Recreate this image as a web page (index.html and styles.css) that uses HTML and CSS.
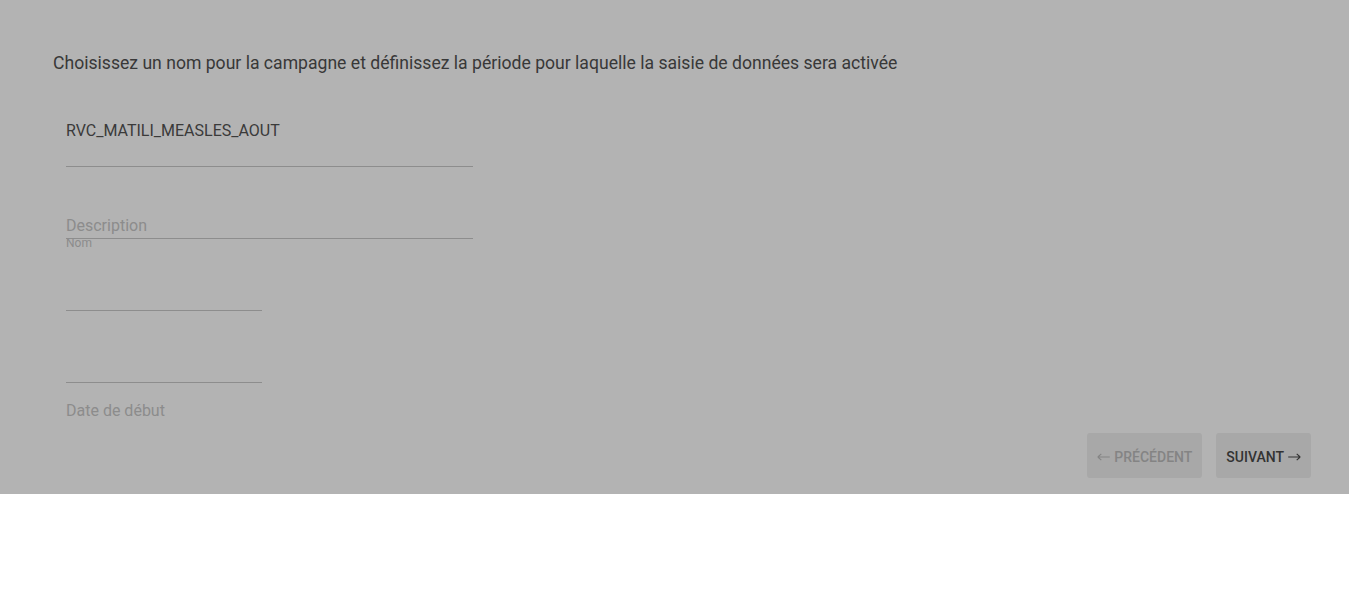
FILE: index.html
```html
<!DOCTYPE html>
<html lang="fr">
<head>
<meta charset="utf-8">
<title>Campagne</title>
<link rel="stylesheet" href="styles.css">
</head>
<body>
<div class="panel">
  <p class="intro">Choisissez un nom pour la campagne et définissez la période pour laquelle la saisie de données sera activée</p>
  <div class="form">
    <div class="field field-name"><span class="value">RVC_MATILI_MEASLES_AOUT</span></div>
    <div class="field field-desc"><span class="placeholder">Description</span></div>
    <div class="float-label">Nom</div>
    <div class="field-short short-a"></div>
    <div class="field-short short-b"></div>
    <div class="date-label">Date de début</div>
  </div>
  <div class="actions">
    <button class="btn btn-disabled" type="button"><svg class="arrow" width="13" height="8" viewBox="0 0 13 8"><path d="M0.8 4H12.8M0.8 4L4.3 0.8M0.8 4L4.3 7.2" fill="none" stroke="currentColor" stroke-width="1.1"/></svg><span>PRÉCÉDENT</span></button>
    <button class="btn" type="button"><span>SUIVANT</span><svg class="arrow" width="13" height="8" viewBox="0 0 13 8"><path d="M0.2 4H12.2M12.2 4L8.7 0.8M12.2 4L8.7 7.2" fill="none" stroke="currentColor" stroke-width="1.1"/></svg></button>
  </div>
</div>
</body>
</html>
```

FILE: styles.css
```css
* { box-sizing: border-box; }
html, body { margin: 0; padding: 0; background: #ffffff; }
body { font-family: Roboto, "Liberation Sans", sans-serif; }

.panel {
  height: 494px;
  background: #b3b3b3;
  padding-top: 52px;
  display: flex;
  flex-direction: column;
}

.intro {
  margin: 0 0 0 53px;
  font-size: 17.6px;
  line-height: 22px;
  color: #383838;
}

.form {
  padding-left: 66px;
  display: flex;
  flex-direction: column;
}

.field {
  width: 407px;
  border-bottom: 1px solid #8d8d8d;
  font-size: 16px;
  line-height: 20px;
}
.field-name { margin-top: 47px; padding-bottom: 25px; }
.field-desc { margin-top: 49px; padding-bottom: 2px; }
.value { color: #3a3a3a; font-size: 16px; }
.placeholder { color: #8c8c8c; }

.float-label {
  margin-top: -3px;
  font-size: 12px;
  line-height: 14px;
  color: #8c8c8c;
}

.field-short {
  width: 196px;
  border-bottom: 1px solid #8d8d8d;
}
.short-a { height: 61px; }
.short-b { height: 72px; }

.date-label {
  margin-top: 18px;
  font-size: 16px;
  line-height: 20px;
  color: #8c8c8c;
}

.actions {
  margin-top: 12px;
  padding-right: 38px;
  display: flex;
  justify-content: flex-end;
  gap: 14px;
}

.btn {
  height: 45px;
  padding: 2px 10px 0;
  border: none;
  border-radius: 3px;
  background: #a8a8a8;
  display: inline-flex;
  align-items: center;
  gap: 4px;
  font-family: Roboto, "Liberation Sans", sans-serif;
  font-size: 14px;
  line-height: 20px;
  font-weight: 500;
  color: #333333;
}
.btn-disabled { color: #848484; }
.arrow { display: block; }
```
